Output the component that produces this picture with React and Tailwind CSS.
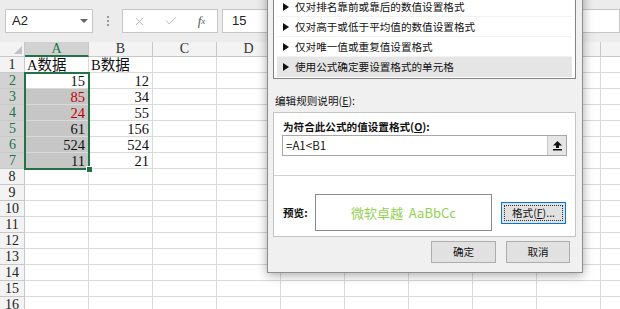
import { X, Check } from "lucide-react";

const cols = ["A", "B", "C", "D", "E", "F", "G", "H", "I", "J"];

const data = {
  1: ["A数据", "B数据"],
  2: ["15", "12"],
  3: ["85", "34"],
  4: ["24", "55"],
  5: ["61", "156"],
  6: ["524", "524"],
  7: ["11", "21"],
};

const rules = [
  "仅对排名靠前或靠后的数值设置格式",
  "仅对高于或低于平均值的数值设置格式",
  "仅对唯一值或重复值设置格式",
  "使用公式确定要设置格式的单元格",
];

const gridFont = { fontFamily: '"Liberation Serif", "Noto Sans CJK SC", serif' };
const uiFont = { fontFamily: '"Noto Sans CJK SC", "Noto Sans", sans-serif' };

function FormulaBar() {
  return (
    <div className="h-[42px] bg-[#ececec] pt-[9px] flex items-start" style={{ fontFamily: '"Liberation Sans", sans-serif' }}>
      <div className="ml-[5px] w-[88px] h-[24px] bg-white border border-[#c6c6c6] flex items-center justify-between pl-[6px] pr-[4px] text-[13px] text-[#222]">
        <span>A2</span>
        <svg width="8" height="5" viewBox="0 0 8 5">
          <polygon points="0,0 8,0 4,4" fill="#666" />
        </svg>
      </div>
      <div className="w-[29px] h-[24px] flex flex-col items-center justify-center gap-[2px]">
        <div className="w-[2px] h-[2px] bg-[#9a9a9a]" />
        <div className="w-[2px] h-[2px] bg-[#9a9a9a]" />
        <div className="w-[2px] h-[2px] bg-[#9a9a9a]" />
      </div>
      <div className="w-[96px] h-[24px] bg-white border border-[#c6c6c6] flex items-center pl-[1px]">
        <div className="w-[31px] flex justify-center">
          <X size={13} strokeWidth={1.5} color="#a8a8a8" />
        </div>
        <div className="w-[31px] flex justify-center">
          <Check size={14} strokeWidth={1.5} color="#a8a8a8" />
        </div>
        <div className="w-[31px] flex justify-center text-[13px] italic text-[#555]" style={{ fontFamily: '"Liberation Serif", serif' }}>
          f<span className="text-[9px] mt-[4px]">x</span>
        </div>
      </div>
      <div className="ml-[4px] flex-1 h-[24px] bg-white border border-[#c6c6c6] pl-[9px] flex items-center text-[13px] text-[#222]">
        15
      </div>
    </div>
  );
}

function HeaderRow() {
  return (
    <div className="flex h-[15px]" style={gridFont}>
      <div className="w-[25px] shrink-0 bg-[#f3f3f3] border-r border-b border-[#c8c8c8] relative">
        <svg className="absolute right-[2px] bottom-[2px]" width="8" height="8" viewBox="0 0 8 8">
          <polygon points="8,0 8,8 0,8" fill="#c2c2c2" />
        </svg>
      </div>
      {cols.map((c) =>
        c === "A" ? (
          <div key={c} className="w-[64px] shrink-0 bg-[#d2d2d2] border-r border-[#c8c8c8] border-b-2 border-b-[#217346] text-[#217346] text-[14px] leading-[14px] text-center">
            {c}
          </div>
        ) : (
          <div key={c} className="w-[64px] shrink-0 bg-[#f3f3f3] border-r border-b border-[#c8c8c8] text-[#333] text-[14px] leading-[14px] text-center">
            {c}
          </div>
        )
      )}
    </div>
  );
}

function Row({ n }) {
  const sel = n >= 2 && n <= 7;
  const vals = data[n] || [];
  return (
    <div className="flex h-[16px]" style={gridFont}>
      <div
        className={
          sel
            ? "w-[25px] shrink-0 bg-[#d2d2d2] border-b border-[#c8c8c8] text-[#217346] text-[14px] leading-[15px] text-center"
            : "w-[25px] shrink-0 bg-[#f3f3f3] border-r border-b border-[#c8c8c8] text-[#222] text-[14px] leading-[15px] text-center"
        }
      >
        {n}
      </div>
      {cols.map((c, i) => {
        const v = vals[i];
        const text = n === 1 ? "text-left pl-[2px]" : "text-right pr-[3px]";
        const fill = c === "A" && n >= 3 && n <= 7 ? "bg-[#c6c6c6]" : "bg-white";
        const red = c === "A" && (n === 3 || n === 4) ? "text-[#c00000]" : "text-[#111]";
        return (
          <div
            key={c}
            className={`w-[64px] shrink-0 border-r border-b border-[#dadada] text-[14.5px] leading-[16px] overflow-hidden whitespace-nowrap ${fill} ${text} ${red}`}
          >
            {v}
          </div>
        );
      })}
    </div>
  );
}

function Btn({ children, w, focus }) {
  return (
    <div
      className={
        focus
          ? "h-[22px] bg-[#e1e1e1] border border-[#0078d7] flex items-center justify-center p-[2px]"
          : "h-[22px] bg-[#e1e1e1] border border-[#adadad] flex items-center justify-center"
      }
      style={{ width: w }}
    >
      {focus ? (
        <div className="w-full h-full border border-dotted border-[#333] flex items-center justify-center">{children}</div>
      ) : (
        children
      )}
    </div>
  );
}

function Dialog() {
  return (
    <div
      className="absolute left-[267px] top-[-10px] w-[316px] bg-[#f0f0f0] border border-[#8e8e8e] pl-[5px] pr-[6px] pb-[9px] shadow-[0_2px_10px_rgba(0,0,0,0.35)] text-[10.6px] text-[#111]"
      style={uiFont}
    >
      <div className="bg-white border border-[#828282] pt-[5px] pb-[1px] px-[3px]">
        {rules.map((r, i) => (
          <div
            key={r}
            className={
              i === 3
                ? "h-[20px] flex items-center pl-[6px] bg-[#e5e5e5]"
                : "h-[20px] flex items-center pl-[6px] border-b border-[#f2f2f2]"
            }
          >
            <svg width="6" height="8" viewBox="0 0 6 8" className="mr-[6px]">
              <polygon points="0,0 6,4 0,8" fill="#111" />
            </svg>
            <span className="leading-[20px]">{r}</span>
          </div>
        ))}
      </div>

      <div className="mt-[14px] pl-[2px] leading-[16px] h-[16px]">
        编辑规则说明(<span className="underline">E</span>):
      </div>

      <div className="mt-[3px] bg-white border border-[#c4c4c4] pb-[5px]">
        <div className="pt-[6px] pl-[9px] leading-[16px] h-[16px] font-bold">
          为符合此公式的值设置格式(<span className="underline">O</span>):
        </div>
        <div className="mt-[6px] ml-[8px] w-[285px] h-[21px] border border-[#a6a6a6] flex items-center">
          <span className="flex-1 pl-[3px] text-[11.5px]">=A1&lt;B1</span>
          <div className="w-[19px] h-full bg-[#e6e6e6] border-l border-[#c8c8c8] flex items-center justify-center">
            <svg width="9" height="10" viewBox="0 0 9 10">
              <polygon points="4.5,0 9,4.5 6,4.5 6,7 3,7 3,4.5 0,4.5" fill="#111" />
              <rect x="0" y="8" width="9" height="1.5" fill="#111" />
            </svg>
          </div>
        </div>
        <div className="mt-[19px] h-px bg-[#d0d0d0]" />
        <div className="mt-[18px] flex items-center pl-[9px]">
          <div className="w-[32px] font-bold">预览:</div>
          <div className="w-[177px] h-[37px] bg-white border border-[#8a8a8a] flex items-center justify-center text-[13px] text-[#92d050]">
            微软卓越&nbsp;&nbsp;AaBbCc
          </div>
          <div className="ml-[9px]">
            <Btn w="65px" focus>
              格式(<span className="underline">F</span>)...
            </Btn>
          </div>
        </div>
      </div>

      <div className="mt-[4px] flex justify-end gap-[10px] pr-[6px]">
        <Btn w="65px">确定</Btn>
        <Btn w="64px">取消</Btn>
      </div>
    </div>
  );
}

export default function App() {
  const rows = Array.from({ length: 16 }, (_, i) => i + 1);
  return (
    <div className="w-[620px] h-[309px] relative overflow-hidden bg-white">
      <FormulaBar />
      <HeaderRow />
      {rows.map((n) => (
        <Row key={n} n={n} />
      ))}
      <div className="absolute left-[24px] top-[72px] w-[66px] h-[98px] border-2 border-[#217346]" />
      <div className="absolute left-[86px] top-[166px] w-[7px] h-[7px] bg-[#217346] border border-white" />
      <Dialog />
    </div>
  );
}
